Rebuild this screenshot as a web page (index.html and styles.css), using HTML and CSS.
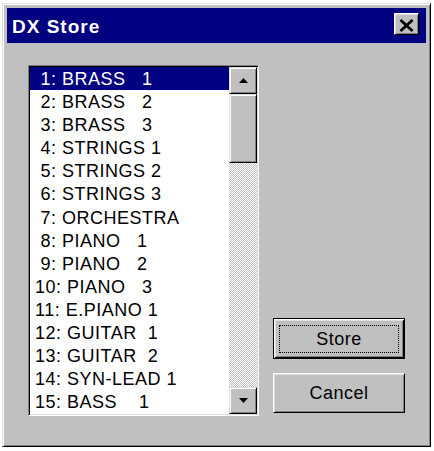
FILE: index.html
```html
<!DOCTYPE html>
<html>
<head>
<meta charset="utf-8">
<title>DX Store</title>
<link rel="stylesheet" href="styles.css">
</head>
<body>
<div class="window">
  <div class="titlebar">
    <span class="title">DX Store</span>
    <button class="close" aria-label="Close">
      <svg width="15" height="13" viewBox="0 0 15 13"><path d="M1.5 1 L13.5 12 M13.5 1 L1.5 12" stroke="#000" stroke-width="2.8" fill="none"/></svg>
    </button>
  </div>
  <div class="body">
    <div class="listbox">
      <ul class="items">
        <li class="sel"> 1: BRASS   1</li>
        <li> 2: BRASS   2</li>
        <li> 3: BRASS   3</li>
        <li> 4: STRINGS 1</li>
        <li> 5: STRINGS 2</li>
        <li> 6: STRINGS 3</li>
        <li> 7: ORCHESTRA</li>
        <li> 8: PIANO   1</li>
        <li> 9: PIANO   2</li>
        <li>10: PIANO   3</li>
        <li>11: E.PIANO 1</li>
        <li>12: GUITAR  1</li>
        <li>13: GUITAR  2</li>
        <li>14: SYN-LEAD 1</li>
        <li>15: BASS    1</li>
      </ul>
      <div class="scrollbar">
        <div class="sb-btn"><svg width="9" height="5" viewBox="0 0 9 5"><polygon points="4.5,0 9,5 0,5" fill="#000"/></svg></div>
        <div class="thumb"></div>
        <div class="track"></div>
        <div class="sb-btn"><svg width="9" height="5" viewBox="0 0 9 5"><polygon points="0,0 9,0 4.5,5" fill="#000"/></svg></div>
      </div>
    </div>
    <div class="buttons">
      <button class="btn default"><span class="focus">Store</span></button>
      <button class="btn cancel">Cancel</button>
    </div>
  </div>
</div>
</body>
</html>
```
FILE: styles.css
```css
* { box-sizing: border-box; }
html, body { margin: 0; padding: 0; background: #fff; }
body { font-family: "Liberation Sans", Arial, sans-serif; }

.window {
  margin: 3px 0 0 2px;
  width: 429px;
  height: 444px;
  background: #c0c0c0;
  border: 1px solid;
  border-color: #dfdfdf #000 #000 #dfdfdf;
  box-shadow: inset 1px 1px #fff, inset -1px -1px #808080;
  padding: 4px;
}

.titlebar {
  height: 35px;
  background: #000080;
  display: flex;
  align-items: flex-start;
}
.title {
  color: #fff;
  font-weight: bold;
  font-size: 19px;
  letter-spacing: 1px;
  line-height: 20px;
  margin-top: 9px;
  padding-left: 5px;
}
.close {
  margin: 5px 7px 0 auto;
  width: 25px;
  height: 22px;
  padding: 2px 1px 0 0;
  background: #c0c0c0;
  border: 1px solid;
  border-color: #fff #000 #000 #fff;
  box-shadow: inset 1px 1px #dfdfdf, inset -1px -1px #808080;
  display: flex;
  align-items: center;
  justify-content: center;
}
.close svg { display: block; }

.body {
  display: flex;
  align-items: flex-end;
  padding: 22px 21px 0 21px;
}

.listbox {
  width: 231px;
  height: 350.5px;
  display: flex;
  background: #fff;
  border: 1px solid;
  border-color: #808080 #fff #fff #808080;
  box-shadow: inset 1px 1px #000, inset -1px -1px #dfdfdf;
  padding: 1px;
}
.items {
  list-style: none;
  margin: 0;
  padding: 0;
  flex: 1;
  overflow: hidden;
}
.items li {
  height: 23.1px;
  line-height: 22.1px;
  padding: 1px 0 0 5px;
  white-space: pre;
  font-size: 18px;
  letter-spacing: 0.5px;
  color: #000;
}
.items li.sel {
  background: #000080;
  color: #fff;
}

.scrollbar {
  width: 28px;
  display: flex;
  flex-direction: column;
}
.sb-btn, .thumb {
  background: #c0c0c0;
  border: 1px solid;
  border-color: #dfdfdf #000 #000 #dfdfdf;
  box-shadow: inset 1px 1px #fff, inset -1px -1px #808080;
}
.sb-btn {
  height: 27px;
  display: flex;
  align-items: center;
  justify-content: center;
}
.sb-btn svg { display: block; }
.thumb { height: 69px; }
.track {
  flex: 1;
  background: repeating-conic-gradient(#c0c0c0 0 25%, #fff 0 50%) 0 0 / 2px 2px;
}

.buttons {
  margin-left: 14px;
  margin-bottom: 2.5px;
  width: 132px;
  display: flex;
  flex-direction: column;
  gap: 14px;
}
.btn {
  font-family: "Liberation Sans", Arial, sans-serif;
  font-size: 18px;
  letter-spacing: 0.5px;
  color: #000;
  background: #c0c0c0;
  border: 1px solid;
  border-color: #fff #000 #000 #fff;
  box-shadow: inset 1px 1px #dfdfdf, inset -1px -1px #808080;
  padding: 0;
  display: flex;
  align-items: center;
  justify-content: center;
}
.btn.cancel { height: 40px; }
.btn.default {
  height: 41px;
  border-color: #000;
  box-shadow: inset 1px 1px #fff, inset -1px -1px #000, inset 2px 2px #dfdfdf, inset -2px -2px #808080;
  padding: 6px 5px 5px 5px;
  align-items: stretch;
}
.focus {
  flex: 1;
  border: 1px dotted #000;
  display: flex;
  align-items: center;
  justify-content: center;
}
```
